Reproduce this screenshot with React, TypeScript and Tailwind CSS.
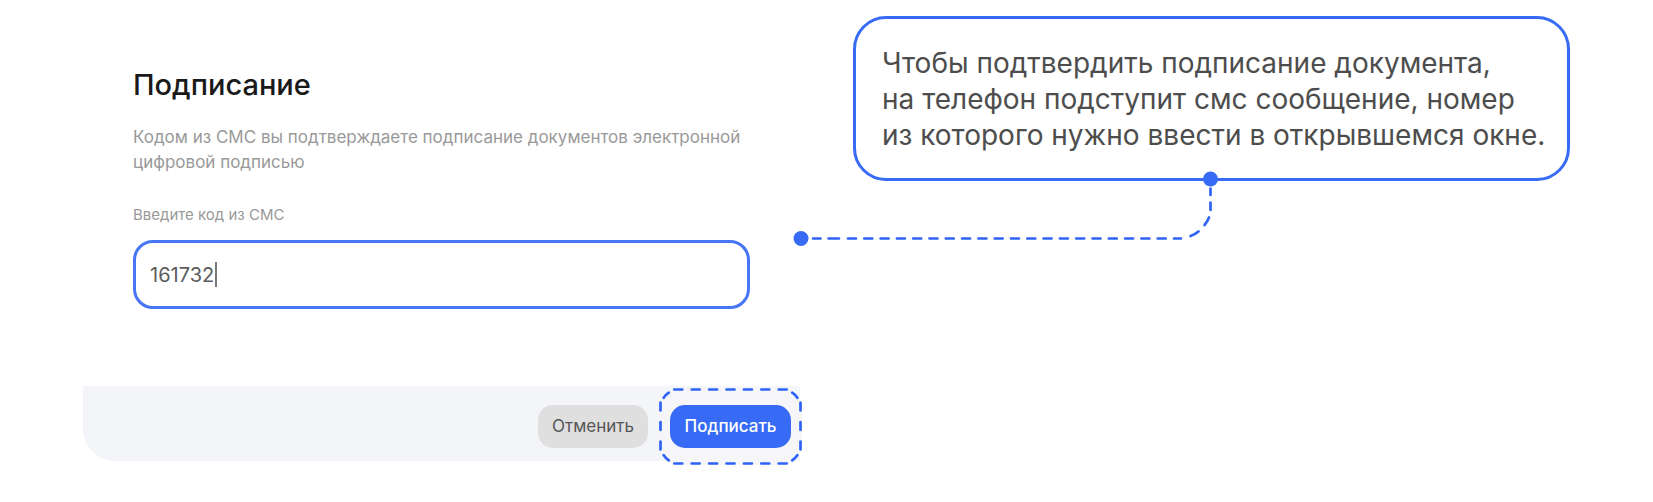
export default function App() {
  return (
    <main className="grid min-h-screen grid-cols-2 items-start gap-[53px] bg-white px-[83px] pt-4 pb-9 font-['Inter','Liberation_Sans',sans-serif]">
      <form className="min-w-0" onSubmit={(e) => e.preventDefault()}>
        <div className="px-[50px] pt-[51px] pb-[77px]">
          <h1 className="text-[29px] leading-9 font-medium text-[#1a1a1a]">Подписание</h1>
          <p className="mt-[22px] text-[17px] leading-[25px] text-[#999999]">
            Кодом из СМС вы подтверждаете подписание документов электронной цифровой подписью
          </p>
          <label htmlFor="sms-code" className="mt-7 block text-[15px] leading-6 text-[#999999]">
            Введите код из СМС
          </label>
          <div className="relative mt-[13px]">
            <input
              id="sms-code"
              type="text"
              inputMode="numeric"
              defaultValue="161732"
              className="block h-[69px] w-full rounded-[20px] border-[3px] border-[#4675f5] bg-white px-[14px] text-[20px] text-[#5c5c5c] caret-transparent outline-none"
            />
            <span aria-hidden="true" className="absolute top-[22px] left-[82px] h-[25px] w-[2px] bg-[#777777]" />
          </div>
        </div>
        <div className="flex h-[75px] items-start justify-end rounded-bl-[32px] bg-[#f4f5f9] pt-[2px]">
          <div className="flex items-center gap-[11px]">
            <button type="button" className="h-[43px] rounded-[15px] bg-[#dfdfdf] px-[14px] text-[17px] text-[#555555]">
              Отменить
            </button>
            <div className="relative -mr-[2px] flex h-[77px] w-[143px] items-center justify-center rounded-[20px] bg-[#f6f6f8]">
              <svg
                aria-hidden="true"
                className="absolute inset-0"
                width="143"
                height="77"
                fill="none"
                stroke="#2f63f5"
                strokeWidth="2.7"
                strokeLinecap="round"
              >
                <path d="M15.3 1.5H128M15.3 75.5H128" strokeDasharray="8 9.4" />
                <path d="M1.5 14.5V62.5M141.5 14.5V62.5" strokeDasharray="8 11.5" />
                <path d="M4.7 9.8Q6.8 6.6 9.8 4.7M133.2 4.7Q136.2 6.6 138.3 9.8M4.7 67.2Q6.8 70.4 9.8 72.3M133.2 72.3Q136.2 70.4 138.3 67.2" />
              </svg>
              <button type="submit" className="relative h-[43px] rounded-[15px] bg-[#376bf5] px-[15px] text-[17px] font-medium text-white">
                Подписать
              </button>
            </div>
          </div>
        </div>
      </form>
      <aside className="relative min-w-0 rounded-[33px] border-[3px] border-[#376bf5] pt-[26px] pr-4 pb-[25px] pl-[26px]">
        <p className="text-[28px] leading-9 text-[#4d4d4d]">
          Чтобы подтвердить подписание документа,
          <br />
          на телефон подступит смс сообщение, номер
          <br />
          из которого нужно ввести в открывшемся окне.
        </p>
        <svg aria-hidden="true" className="absolute top-full right-1/2 -mt-[7px] -mr-[7px]" width="426" height="76" fill="none">
          <g stroke="#2f63f5" strokeWidth="2.7" strokeLinecap="round">
            <path d="M20 67.5H27.5M35.5 67.5H46" />
            <path d="M55 67.5H388" strokeDasharray="8 8.3" />
            <path d="M397.5 65Q402 63.5 405.5 60.5M411.5 54Q414.5 50.5 416 46.5M417.5 39V31.5M417.5 24V17.5" />
          </g>
          <circle cx="8" cy="67.5" r="7.5" fill="#376bf5" />
          <circle cx="417.5" cy="8" r="7.5" fill="#376bf5" />
        </svg>
      </aside>
    </main>
  );
}
